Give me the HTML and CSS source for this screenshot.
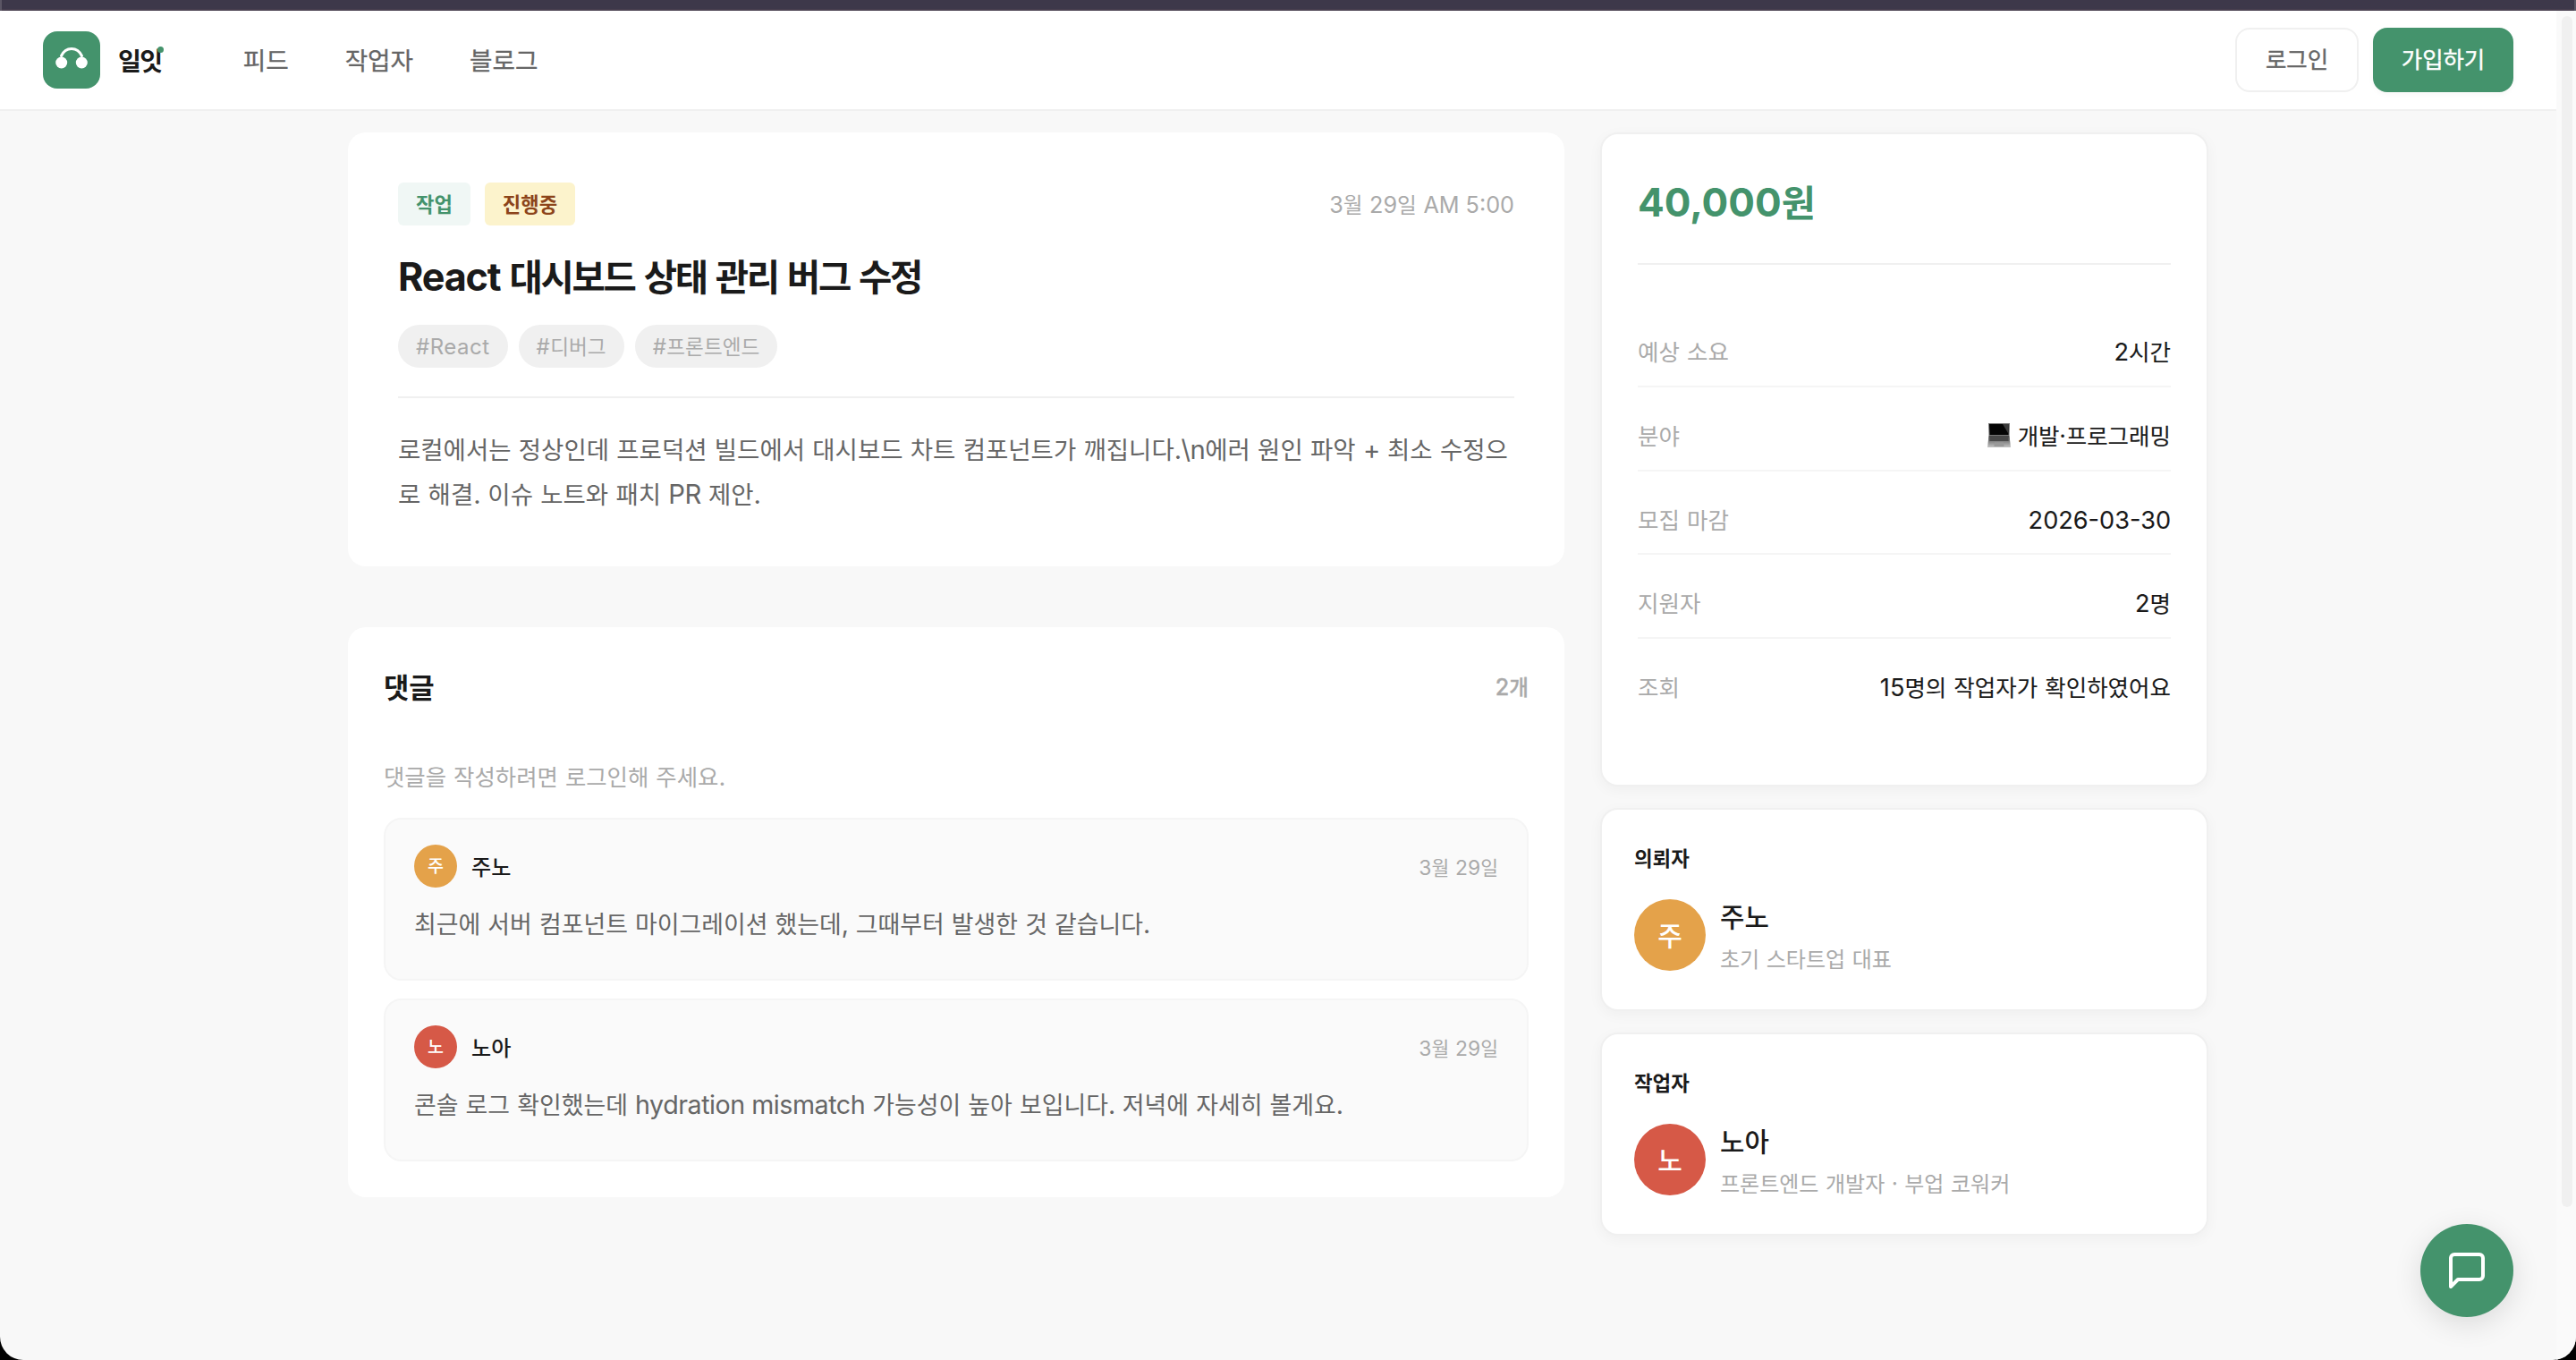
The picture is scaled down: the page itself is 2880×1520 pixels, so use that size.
FILE: index.html
```html
<!DOCTYPE html>
<html lang="ko">
<head>
<meta charset="utf-8">
<title>일잇</title>
<link rel="stylesheet" href="styles.css">
</head>
<body>
<div class="window">
  <div class="titlebar"></div>
  <div class="viewport">
    <div class="page">
      <header class="header">
        <a class="logo">
          <svg class="logo-mark" viewBox="0 0 64 64"><rect width="64" height="64" rx="16" fill="#44936c"/><path d="M20.500 27.500C25.500 16.800 38.500 16.800 43.500 27.500" fill="none" stroke="#fff" stroke-width="3" stroke-linecap="round"/><circle cx="20.700" cy="35" r="6.500" fill="#fff"/><circle cx="43.300" cy="35" r="6.500" fill="#fff"/></svg>
          <span class="logo-text">일잇<i class="logo-dot"></i></span>
        </a>
        <nav class="nav"><a>피드</a><a>작업자</a><a>블로그</a></nav>
        <div class="actions">
          <button class="btn">로그인</button>
          <button class="btn btn-primary">가입하기</button>
        </div>
      </header>

      <main class="main">
        <div class="content">
          <article class="post">
            <div class="post-top">
              <span class="badge badge-type">작업</span>
              <span class="badge badge-state">진행중</span>
              <time class="post-date"><span class="en">3</span>월 <span class="en">29</span>일 <span class="en">AM 5:00</span></time>
            </div>
            <h1 class="post-title"><span class="en">React</span> 대시보드 상태 관리 버그 수정</h1>
            <div class="tags">
              <span class="tag"><span class="en">#React</span></span>
              <span class="tag"><span class="en">#</span>디버그</span>
              <span class="tag"><span class="en">#</span>프론트엔드</span>
            </div>
            <p class="post-body">로컬에서는 정상인데 프로덕션 빌드에서 대시보드 차트 컴포넌트가 깨집니다<span class="en">.\n</span>에러 원인 파악 <span class="en">+</span> 최소 수정으로 해결<span class="en">.</span> 이슈 노트와 패치 <span class="en">PR</span> 제안<span class="en">.</span></p>
          </article>

          <section class="comments">
            <div class="comments-head"><h2>댓글</h2><span class="count"><span class="en">2</span>개</span></div>
            <p class="comments-hint">댓글을 작성하려면 로그인해 주세요<span class="en">.</span></p>
            <div class="comment">
              <div class="comment-head"><span class="avatar avatar-sm amber">주</span><b>주노</b><time><span class="en">3</span>월 <span class="en">29</span>일</time></div>
              <p>최근에 서버 컴포넌트 마이그레이션 했는데<span class="en">,</span> 그때부터 발생한 것 같습니다<span class="en">.</span></p>
            </div>
            <div class="comment">
              <div class="comment-head"><span class="avatar avatar-sm red">노</span><b>노아</b><time><span class="en">3</span>월 <span class="en">29</span>일</time></div>
              <p>콘솔 로그 확인했는데 <span class="en">hydration mismatch</span> 가능성이 높아 보입니다<span class="en">.</span> 저녁에 자세히 볼게요<span class="en">.</span></p>
            </div>
          </section>
        </div>

        <aside class="side">
          <section class="card summary">
            <div class="price"><span class="en">40,000</span>원</div>
            <dl class="facts">
              <div class="fact"><dt>예상 소요</dt><dd><span class="en">2</span>시간</dd></div>
              <div class="fact"><dt>분야</dt><dd><svg class="laptop" viewBox="0 0 26 27"><defs><linearGradient id="base" x1="0" y1="0" x2="0" y2="1"><stop offset="0" stop-color="#444"/><stop offset="1" stop-color="#c4c4c4"/></linearGradient></defs><path d="M1 0h24l-.5 14h-23z" fill="#777"/><path d="M2 1h22l-.5 12h-21z" fill="#050505"/><path d="M17 1h7l-.4 11z" fill="#3c3c3c"/><path d="M1.500 14h23L26 27H0z" fill="url(#base)"/><path d="M3 15h20l.7 5H2.300z" fill="#4a4a4a"/><path d="M8 21.500h10l.6 4.500H7.400z" fill="#999"/></svg>개발·프로그래밍</dd></div>
              <div class="fact"><dt>모집 마감</dt><dd><span class="en">2026-03-30</span></dd></div>
              <div class="fact"><dt>지원자</dt><dd><span class="en">2</span>명</dd></div>
              <div class="fact"><dt>조회</dt><dd><span class="en">15</span>명의 작업자가 확인하였어요</dd></div>
            </dl>
          </section>
          <section class="card person">
            <h3>의뢰자</h3>
            <div class="person-row"><span class="avatar avatar-lg amber">주</span><div><div class="person-name">주노</div><div class="person-role">초기 스타트업 대표</div></div></div>
          </section>
          <section class="card person">
            <h3>작업자</h3>
            <div class="person-row"><span class="avatar avatar-lg red">노</span><div><div class="person-name">노아</div><div class="person-role">프론트엔드 개발자 · 부업 코워커</div></div></div>
          </section>
        </aside>
      </main>
    </div>
    <div class="scrollbar"><div class="thumb"></div></div>
  </div>
  <button class="chat"><svg viewBox="0 0 24 24" fill="none" stroke="#fff" stroke-width="2" stroke-linecap="round" stroke-linejoin="round"><path d="M21 15a2 2 0 0 1-2 2H7l-4 4V5a2 2 0 0 1 2-2h14a2 2 0 0 1 2 2z"/></svg></button>
</div>
</body>
</html>
```
FILE: styles.css
```css
* { box-sizing: border-box; margin: 0; padding: 0; }
body { background: #000; }
.window {
  position: relative;
  width: 2880px;
  height: 1520px;
  display: flex;
  flex-direction: column;
  background: #f8f8f8;
  border-radius: 0 0 26px 26px;
  overflow: hidden;
  font-family: "Noto Sans CJK KR", sans-serif;
  color: #1a1a1a;
  font-size: 25.5px;
  word-spacing: 0.9px;
}
button { font: inherit; }
.en { font-family: Inter, sans-serif; font-size: 1.064em; line-height: 1; word-spacing: 0; }

.titlebar {
  height: 12px;
  background: #3d384a;
  border: solid #5b5665;
  border-width: 0 2px;
  box-shadow: inset 0 -2px #483f4f;
}
.viewport { flex: 1; display: flex; }
.page { flex: 1; }
.scrollbar { width: 22px; padding: 6px 4px 0 6px; background: #fafafa; }
.thumb { height: 1331px; border-radius: 6px; background: #f0f0f0; }

.header {
  height: 112px;
  display: flex;
  align-items: center;
  padding: 0 48px;
  background: #fff;
  border-bottom: 2px solid #f0f0f0;
}
.logo { display: flex; align-items: center; gap: 20px; }
.logo-mark { width: 64px; height: 64px; display: block; }
.logo-text { position: relative; font-size: 28.2px; line-height: 40px; font-weight: 700; letter-spacing: -1.6px; }
.logo-dot { position: absolute; right: -2px; top: 5px; width: 7px; height: 7px; border-radius: 50%; background: #44936c; }
.nav { display: flex; gap: 63px; margin: 0 0 2px 91px; font-size: 27.7px; -webkit-text-stroke: 0.3px; color: #666; line-height: 40px; }
.actions { display: flex; gap: 16px; margin-left: auto; }
.btn {
  width: 138px;
  height: 72px;
  padding-bottom: 5px;
  border: 2px solid #f0f0f0;
  border-radius: 16px;
  background: #fff;
  color: #666;
  font-size: 25.4px;
  -webkit-text-stroke: 0.4px;
}
.btn-primary { width: 157px; border-color: #44936c; background: #44936c; color: #fff; box-shadow: 0 2px 6px rgba(0, 0, 0, .04); }

.main { display: flex; gap: 40px; width: 2080px; margin: 24px auto 0; }
.content { width: 1360px; display: flex; flex-direction: column; gap: 68px; }
.side { width: 680px; display: flex; flex-direction: column; gap: 24px; }

.post { height: 485px; padding: 56px; background: #fff; border-radius: 20px; }
.post-top { display: flex; align-items: center; gap: 16px; height: 48px; }
.badge { height: 48px; padding: 0 20px; border-radius: 6px; font-size: 22.2px; font-weight: 700; line-height: 47px; }
.badge-type { background: #f0f7f5; color: #44936c; }
.badge-state { background: #fcf3cc; color: #8c441a; }
.post-date { margin-left: auto; font-size: 23.7px; line-height: 46px; color: #aaa; }
.post-title { margin-top: 28px; font-size: 40.6px; line-height: 56px; font-weight: 700; letter-spacing: -0.056em; }
.post-title .en { letter-spacing: -0.027em; }
.tags { display: flex; gap: 12px; margin-top: 27px; }
.tag { height: 48px; padding: 0 20px; border-radius: 24px; background: #f0f0f0; color: #aaa; font-size: 22.6px; line-height: 48px; }
.tag .en { letter-spacing: 0.02em; }
.post-body { margin-top: 32px; padding-top: 31px; border-top: 2px solid #f0f0f0; font-size: 27.5px; line-height: 50.4px; color: #666; word-break: break-all; word-spacing: 0.6px; }
.post-body .en { letter-spacing: -0.02em; }

.comments { height: 637px; padding: 40px; background: #fff; border-radius: 20px; }
.comments-head { display: flex; align-items: center; justify-content: space-between; height: 52px; }
.comments-head h2 { font-size: 30.8px; line-height: 52px; font-weight: 700; }
.count { font-size: 23.6px; font-weight: 500; -webkit-text-stroke: 0.3px; line-height: 48px; color: #aaa; }
.comments-hint { margin-top: 54px; line-height: 40px; font-size: 25.4px; color: #aaa; }
.comment { height: 182px; padding: 28px 32px; border: 2px solid #f5f5f5; border-radius: 20px; background: #fafafa; }
.comment + .comment { margin-top: 20px; }
.comments-hint + .comment { margin-top: 27px; }
.comment-head { display: flex; align-items: center; gap: 16px; height: 48px; }
.comment-head b { font-size: 24.1px; line-height: 46px; font-weight: 500; }
.comment-head time { margin-left: auto; font-size: 21.5px; line-height: 47px; color: #aaa; }
.comment p { margin-top: 15px; font-size: 26.9px; line-height: 50px; color: #666; word-spacing: 0.6px; }
.comment p .en { letter-spacing: -0.016em; }

.avatar { flex: none; display: block; border-radius: 50%; color: #fff; text-align: center; font-weight: 500; }
.avatar-sm { width: 48px; height: 48px; font-size: 19.6px; line-height: 46px; }
.avatar-lg { width: 80px; height: 80px; font-size: 30px; line-height: 78px; }
.amber { background: #e4a24a; }
.red { background: #d65947; }

.card { border: 2px solid #f0f0f0; border-radius: 20px; background: #fff; box-shadow: 0 4px 16px rgba(0, 0, 0, .04); }
.summary { height: 731px; padding: 40px; }
.price { height: 106px; padding-top: 1px; border-bottom: 2px solid #f0f0f0; font-size: 41.4px; line-height: 66px; font-weight: 700; color: #44936c; }
.facts { margin-top: 43.3px; }
.fact { display: flex; justify-content: space-between; height: 93.67px; padding-top: 33px; border-bottom: 2px solid #f5f5f5; line-height: 40px; }
.fact:last-child { border-bottom: 0; }
.fact dt { color: #aaa; }
.fact dd { -webkit-text-stroke: 0.1px; }
.laptop { width: 26px; height: 27px; margin-right: 8px; vertical-align: -3px; }
.person { height: 227px; padding: 32px 36px; }
.person h3 { font-size: 22.4px; line-height: 42px; height: 40px; font-weight: 700; }
.person-row { display: flex; gap: 16px; margin-top: 28px; }
.person-name { margin-top: -5px; font-size: 29.8px; line-height: 46px; font-weight: 500; }
.person-role { margin-top: 5px; font-size: 24px; line-height: 40px; color: #aaa; }

.chat {
  position: absolute;
  right: 70px;
  bottom: 48px;
  width: 104px;
  height: 104px;
  display: flex;
  align-items: center;
  justify-content: center;
  border: 0;
  border-radius: 50%;
  background: #44936c;
  box-shadow: 0 8px 32px rgba(0, 0, 0, .12);
}
.chat svg { width: 48px; height: 48px; }
```
